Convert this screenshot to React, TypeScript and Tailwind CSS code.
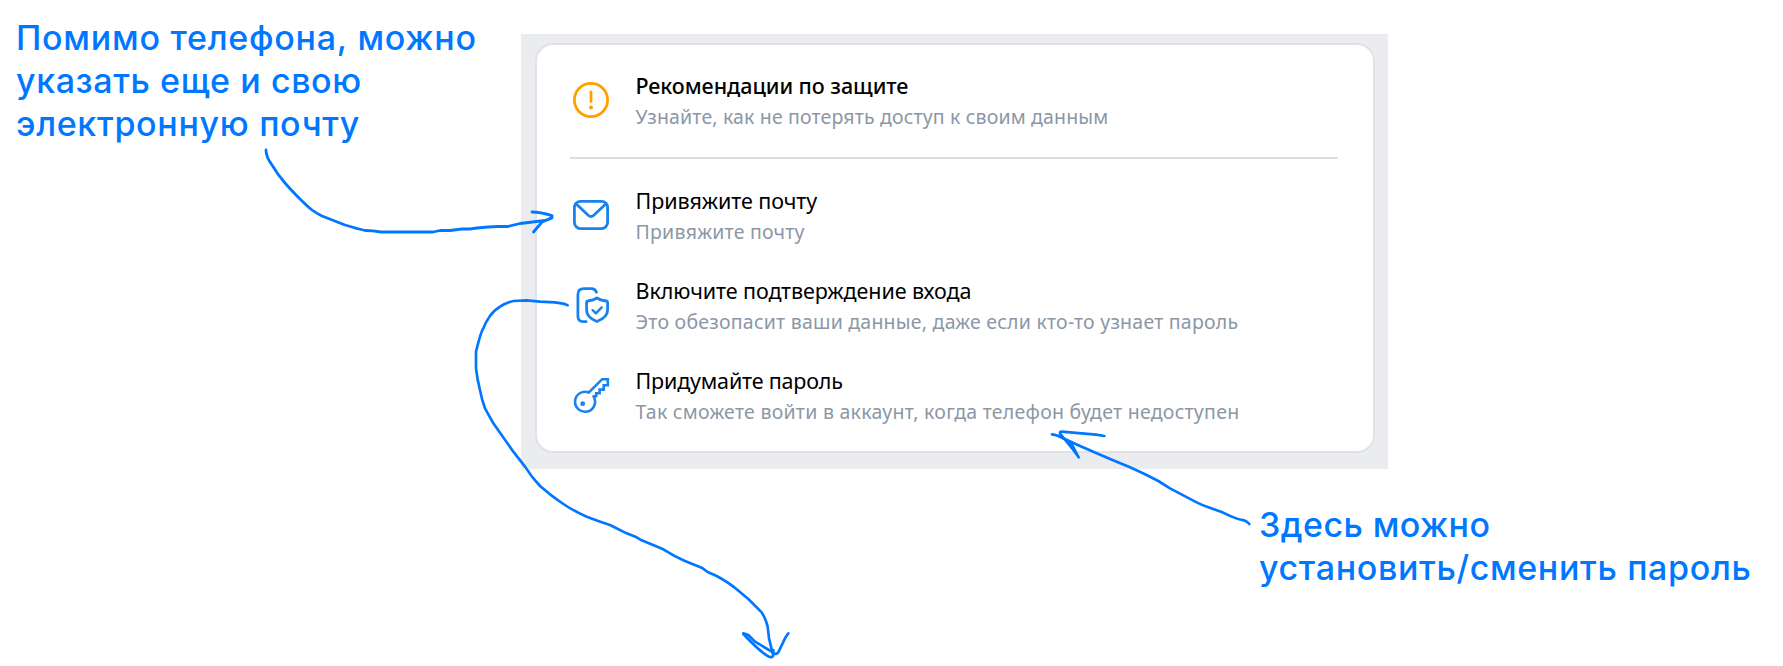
import type { ReactNode } from 'react';

const line = {
  fill: 'none',
  stroke: 'currentColor',
  strokeWidth: 2.8,
  strokeLinecap: 'round' as const,
  strokeLinejoin: 'round' as const,
};

function WarningIcon() {
  return (
    <svg viewBox="0 0 42 42" className="size-[42px] text-[#ffa000]">
      <circle cx="21" cy="21" r="16.6" {...line} />
      <path d="M21 13v9.6" {...line} />
      <circle cx="21" cy="28.6" r="2" fill="currentColor" />
    </svg>
  );
}

function MailIcon() {
  return (
    <svg viewBox="0 0 42 42" className="size-[42px] text-[#1a82ee]">
      <rect x="4.400" y="7.400" width="33.200" height="27.200" rx="6" {...line} />
      <path d="M5.800 9.400l12.400 11.800q2.800 2.600 5.600 0L36.200 9.400" {...line} />
    </svg>
  );
}

function ShieldIcon() {
  return (
    <svg viewBox="0 0 42 42" className="size-[42px] text-[#1a82ee]">
      <path d="M26.500 8.200c-1-2.400-2.300-3.500-5-3.500h-7.600c-4.200 0-6 1.800-6 6v21.400c0 4 1.500 5.600 5.200 5.600h3" {...line} />
      <path d="M26.900 14c2.500 1.700 5.700 2.500 9.400 3 .9.100 1.300.6 1.300 1.500v7.600c0 5.600-5 9.300-10.700 11.400-5.700-2.100-10.300-5.800-10.300-11.400v-7.600c0-.9.4-1.400 1.300-1.500 3.400-.5 6.500-1.300 9-3z" {...line} />
      <path d="M22.600 26.200l3.300 3.200 5.800-6" {...line} strokeWidth={2.4} />
    </svg>
  );
}

function KeyIcon() {
  return (
    <svg viewBox="0 0 42 42" className="size-[42px] text-[#1a82ee]">
      <path
        d="M23.6 22.6A10 10 0 1 1 18.800 18.500L32.200 5.200H37.800V11.200H33.700V15.600H29.600V19.200H26.200V22.200H23.600"
        {...line}
        strokeWidth={2.6}
        strokeLinejoin="miter"
      />
      <circle cx="12.700" cy="29.700" r="2.400" fill="currentColor" />
    </svg>
  );
}

type RowProps = {
  icon: ReactNode;
  title: string;
  text: string;
  titleClass: string;
  textClass: string;
};

function Row({ icon, title, text, titleClass, textClass }: RowProps) {
  return (
    <div className="flex h-[90px] items-start gap-[23.5px]">
      <div className="shrink-0 pt-[25px]">{icon}</div>
      <div className="pt-[17px] whitespace-nowrap">
        <div className={`text-[21.5px] leading-[30px] text-black ${titleClass}`}>{title}</div>
        <div className={`pt-px text-[19.5px] leading-[30px] text-[#8b97a6] ${textClass}`}>{text}</div>
      </div>
    </div>
  );
}

function Arrows() {
  return (
    <svg
      viewBox="0 0 1783 666"
      className="pointer-events-none absolute inset-0 h-[666px] w-[1783px]"
      fill="none"
      stroke="#0077ff"
      strokeWidth="2.8"
      strokeLinecap="round"
      strokeLinejoin="round"
    >
      <path d="M266 150C266 156 269 161 272 165Q278 175 285 183Q291 190 300 199Q307 206 312 210Q316 213 322 216L345 225Q358 229 365 230.500Q373 230.500 381 232H433L440 230.500H450L462 229H470L477 228L488 227L498 226.500H508L520 223.500L545 220.500Q550 219 552 216.500" />
      <path d="M532 212Q540 212 552 215.500M552 218L542 222L533.500 232" />
      <g transform="translate(440 280) scale(.33333)" strokeWidth="8">
        <path d="M383 76Q378 71 345 67L300 65L260 61L220 63Q198 68 180 80Q160 93 150 108Q137 126 130 145Q123 155 108 215V265Q112 300 120 330Q125 358 135 385L160 430L220 515L255 560Q275 592 300 618Q334 648 370 672Q405 695 440 710Q474 723 510 735L560 760L590 772L605 781L670 808Q703 829 735 843L785 863L803 876L830 888Q870 910 890 928L925 957L965 997Q979 1020 983 1040L987 1075L998 1120" />
        <path d="M910 1062Q955 1110 980 1126Q997 1138 1000 1124V1110M910 1060L925 1065L945 1085L1000 1118Q1010 1127 1016 1115L1035 1075L1045 1060" />
      </g>
      <g transform="translate(1030 420) scale(.33333)" strokeWidth="8">
        <path d="M66 43Q84 45 93 52L150 78L235 115L300 142Q345 162 385 183L420 205L500 247Q518 256 535 262L575 276L605 290Q620 297 642 301Q652 305 658 312" />
        <path d="M223 48L198 44L155 40L95 35Q86 35 92 43L110 65L130 90L146 112L124 70L95 52" />
      </g>
    </svg>
  );
}

export default function App() {
  return (
    <main className="relative flex h-[666px] w-[1783px] items-start overflow-hidden bg-white">
      <div className="w-[521px] shrink-0 pt-[16px] pl-[16px] font-['Inter',sans-serif] text-[34px] leading-[43px] font-medium whitespace-nowrap text-[#0077ff]">
        <p className="tracking-[0.75px]">Помимо телефона, можно</p>
        <p className="tracking-[0.6px]">указать еще и свою</p>
        <p className="tracking-[0.68px]">электронную почту</p>
      </div>

      <div className="mt-[34px] h-[435px] w-[867px] shrink-0 bg-[#ebecf0] pt-[9px] pl-[13.5px] font-['Noto_Sans',sans-serif]">
        <section className="h-[409.5px] w-[840px] rounded-[18px] border-2 border-[#e1e2e4] bg-white pt-[9px] pr-[34.5px] pl-[33.5px]">
          <Row
            icon={<WarningIcon />}
            title="Рекомендации по защите"
            text="Узнайте, как не потерять доступ к своим данным"
            titleClass="font-medium tracking-[-0.05px]"
            textClass="tracking-[0.16px]"
          />
          <hr className="mt-[13px] mb-[10px] border-t-2 border-[#dcdddf]" />
          <Row
            icon={<MailIcon />}
            title="Привяжите почту"
            text="Привяжите почту"
            titleClass="tracking-[-0.08px]"
            textClass="tracking-[0.23px]"
          />
          <Row
            icon={<ShieldIcon />}
            title="Включите подтверждение входа"
            text="Это обезопасит ваши данные, даже если кто-то узнает пароль"
            titleClass="tracking-[-0.08px]"
            textClass="tracking-[0.23px]"
          />
          <Row
            icon={<KeyIcon />}
            title="Придумайте пароль"
            text="Так сможете войти в аккаунт, когда телефон будет недоступен"
            titleClass="tracking-[-0.18px]"
            textClass="tracking-[0.26px]"
          />
        </section>
      </div>

      <div className="mt-[503px] -ml-[129px] font-['Inter',sans-serif] text-[34px] leading-[43px] font-medium whitespace-nowrap text-[#0077ff]">
        <p className="tracking-[0.43px]">Здесь можно</p>
        <p className="tracking-[0.65px]">установить/сменить пароль</p>
      </div>

      <Arrows />
    </main>
  );
}
